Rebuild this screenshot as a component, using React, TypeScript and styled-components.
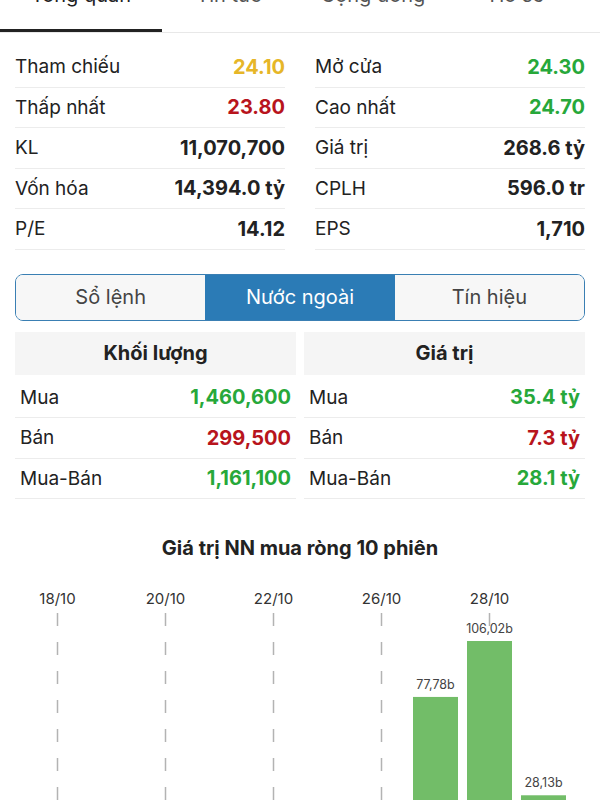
import styled, { createGlobalStyle } from 'styled-components';

const GlobalStyle = createGlobalStyle`
  html, body {
    margin: 0;
    padding: 0;
    background: #ffffff;
    overflow: hidden;
  }
  body {
    font-family: Inter, "Noto Sans", "Liberation Sans", sans-serif;
    color: #222;
  }
`;

const Page = styled.div`
  width: 600px;
  display: flex;
  flex-direction: column;
`;

const TabBar = styled.div`
  display: flex;
  margin-top: -17px;
  height: 50px;
  border-bottom: 1px solid #e8e8e8;
  box-sizing: border-box;
`;

const Tab = styled.div<{ $active?: boolean; $w: number }>`
  width: ${(p) => p.$w}px;
  height: 49px;
  box-sizing: border-box;
  text-align: center;
  font-size: 20px;
  line-height: 24px;
  color: ${(p) => (p.$active ? '#222' : '#555')};
  border-bottom: 3px solid ${(p) => (p.$active ? '#222' : 'transparent')};
`;

const StatsGrid = styled.div`
  display: grid;
  grid-template-columns: 1fr 1fr;
  column-gap: 30px;
  padding: 0 15px;
  margin-top: 14px;
`;

const StatRow = styled.div`
  height: 40.5px;
  box-sizing: border-box;
  display: flex;
  align-items: center;
  justify-content: space-between;
  border-bottom: 1px solid #ececec;
  font-size: 19px;
`;

const Label = styled.span`
  color: #222;
`;

const Value = styled.span<{ $color?: string }>`
  font-size: 20px;
  font-weight: 700;
  color: ${(p) => p.$color || '#222'};
`;

const Segmented = styled.div`
  display: flex;
  margin: 24px 15px 0;
  height: 47px;
  border: 1.5px solid #3a7fb3;
  border-radius: 8px;
  overflow: hidden;
  box-sizing: border-box;
`;

const Segment = styled.div<{ $active?: boolean }>`
  flex: 1;
  display: flex;
  align-items: center;
  justify-content: center;
  font-size: 20px;
  background: ${(p) => (p.$active ? '#2b7bb6' : '#f7f7f7')};
  color: ${(p) => (p.$active ? '#ffffff' : '#444')};
`;

const ForeignGrid = styled.div`
  display: grid;
  grid-template-columns: 1fr 1fr;
  column-gap: 8px;
  margin: 11px 15px 0;
`;

const Column = styled.div`
  display: flex;
  flex-direction: column;
`;

const HeaderCell = styled.div`
  height: 43px;
  display: flex;
  align-items: center;
  justify-content: center;
  background: #f5f5f5;
  font-size: 20px;
  font-weight: 700;
  color: #222;
  margin-bottom: 3px;
`;

const ForeignRow = styled(StatRow)`
  padding: 0 5px;
`;

const ChartTitle = styled.div`
  margin-top: 37px;
  text-align: center;
  font-size: 20px;
  font-weight: 700;
  color: #222;
`;

const ChartSvg = styled.svg`
  display: block;
  margin-top: 16px;
`;

const GREEN = '#27a83a';
const RED = '#b8141c';
const YELLOW = '#e6b628';

const tabs = [
  { name: 'Tổng quan', w: 162, active: true },
  { name: 'Tin tức', w: 134 },
  { name: 'Cộng đồng', w: 154 },
  { name: 'Hồ sơ', w: 134 },
];

const leftStats = [
  { label: 'Tham chiếu', value: '24.10', color: YELLOW },
  { label: 'Thấp nhất', value: '23.80', color: RED },
  { label: 'KL', value: '11,070,700' },
  { label: 'Vốn hóa', value: '14,394.0 tỷ' },
  { label: 'P/E', value: '14.12' },
];

const rightStats = [
  { label: 'Mở cửa', value: '24.30', color: GREEN },
  { label: 'Cao nhất', value: '24.70', color: GREEN },
  { label: 'Giá trị', value: '268.6 tỷ' },
  { label: 'CPLH', value: '596.0 tr' },
  { label: 'EPS', value: '1,710' },
];

const volumeRows = [
  { label: 'Mua', value: '1,460,600', color: GREEN },
  { label: 'Bán', value: '299,500', color: RED },
  { label: 'Mua-Bán', value: '1,161,100', color: GREEN },
];

const valueRows = [
  { label: 'Mua', value: '35.4 tỷ', color: GREEN },
  { label: 'Bán', value: '7.3 tỷ', color: RED },
  { label: 'Mua-Bán', value: '28.1 tỷ', color: GREEN },
];

// net foreign buy value, 10 sessions
const sessions = [
  { date: '18/10', v: -42.5 },
  { date: '19/10', v: -18.3 },
  { date: '20/10', v: -25.1 },
  { date: '21/10', v: -9.6 },
  { date: '22/10', v: -31.2 },
  { date: '25/10', v: -12.4 },
  { date: '26/10', v: -20.7 },
  { date: '27/10', v: 77.78 },
  { date: '28/10', v: 106.02 },
  { date: '29/10', v: 28.13 },
];

function NetChart() {
  const base = 275;
  const scale = 210 / 106.02;
  const slot = 54;
  const left = 30.5;
  const barW = 45;
  return (
    <ChartSvg width={600} height={225} viewBox="0 0 600 225">
      {sessions.map((s, i) =>
        i % 2 === 0 ? (
          <g key={'d' + s.date}>
            <text x={left + slot * i + slot / 2} y={28} fontSize={15} fill="#333" textAnchor="middle" fontFamily="Inter, sans-serif">
              {s.date}
            </text>
            <line
              x1={left + slot * i + slot / 2}
              x2={left + slot * i + slot / 2}
              y1={37}
              y2={225}
              stroke="#b3b3b3"
              strokeWidth={1.5}
              strokeDasharray="13 16"
            />
          </g>
        ) : null
      )}
      {sessions.map((s, i) => {
        const h = Math.abs(s.v) * scale;
        const x = left + slot * i + (slot - barW) / 2;
        if (s.v < 0) {
          return <rect key={s.date} x={x} y={base} width={barW} height={h} fill="#e06b6b" />;
        }
        return (
          <g key={s.date}>
            <rect x={x} y={base - h} width={barW} height={h} fill="#72bd68" />
            <text x={x + barW / 2} y={base - h - 8} fontSize={12.5} fill="#444" textAnchor="middle" fontFamily="Inter, sans-serif">
              {s.v.toFixed(2).replace('.', ',')}b
            </text>
          </g>
        );
      })}
    </ChartSvg>
  );
}

export default function App() {
  return (
    <Page>
      <GlobalStyle />
      <TabBar>
        {tabs.map((t) => (
          <Tab key={t.name} $w={t.w} $active={t.active}>
            {t.name}
          </Tab>
        ))}
      </TabBar>

      <StatsGrid>
        <Column>
          {leftStats.map((s) => (
            <StatRow key={s.label}>
              <Label>{s.label}</Label>
              <Value $color={s.color}>{s.value}</Value>
            </StatRow>
          ))}
        </Column>
        <Column>
          {rightStats.map((s) => (
            <StatRow key={s.label}>
              <Label>{s.label}</Label>
              <Value $color={s.color}>{s.value}</Value>
            </StatRow>
          ))}
        </Column>
      </StatsGrid>

      <Segmented>
        <Segment>Sổ lệnh</Segment>
        <Segment $active>Nước ngoài</Segment>
        <Segment>Tín hiệu</Segment>
      </Segmented>

      <ForeignGrid>
        <Column>
          <HeaderCell>Khối lượng</HeaderCell>
          {volumeRows.map((r) => (
            <ForeignRow key={r.label}>
              <Label>{r.label}</Label>
              <Value $color={r.color}>{r.value}</Value>
            </ForeignRow>
          ))}
        </Column>
        <Column>
          <HeaderCell>Giá trị</HeaderCell>
          {valueRows.map((r) => (
            <ForeignRow key={r.label}>
              <Label>{r.label}</Label>
              <Value $color={r.color}>{r.value}</Value>
            </ForeignRow>
          ))}
        </Column>
      </ForeignGrid>

      <ChartTitle>Giá trị NN mua ròng 10 phiên</ChartTitle>
      <NetChart />
    </Page>
  );
}
